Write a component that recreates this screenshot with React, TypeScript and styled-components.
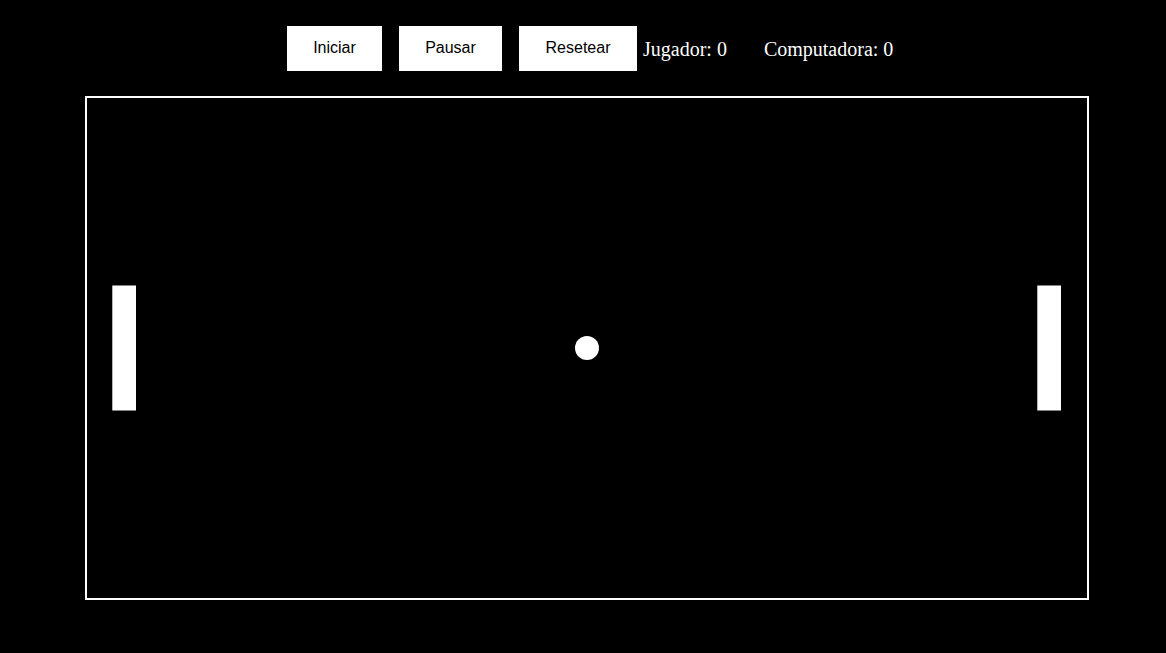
import React from "react";
import styled, { createGlobalStyle } from "styled-components";

const Global = createGlobalStyle`
  html, body { margin: 0; padding: 0; background: #000; }
  body { font-family: "Liberation Serif", "Times New Roman", serif; }
`;

const Page = styled.div`
  display: flex;
  flex-direction: column;
  width: 1166px;
  height: 653px;
  background: #000;
`;

const Toolbar = styled.div`
  display: flex;
  align-items: center;
  padding: 26px 0 0 287px;
  height: 45px;
`;

const Button = styled.button<{ $w: number; $mr: number }>`
  width: ${(p) => p.$w}px;
  height: 45px;
  margin-right: ${(p) => p.$mr}px;
  padding: 0;
  border: none;
  background: #fff;
  color: #000;
  font-family: "Liberation Sans", Arial, sans-serif;
  font-size: 16px;
  cursor: pointer;
  padding-bottom: 2px;
`;

const Score = styled.span<{ $mr: number }>`
  color: #fff;
  font-family: "Liberation Serif", "Times New Roman", serif;
  font-size: 20px;
  margin-right: ${(p) => p.$mr}px;
  padding-top: 2px;
`;

const Board = styled.div`
  margin: 25px 0 0 85px;
  width: 1000px;
  height: 500px;
  border: 2px solid #fff;
  background: #000;
`;

const Field = styled.svg`
  display: block;
  width: 1000px;
  height: 500px;
`;

export default function App() {
  return (
    <>
      <Global />
      <Page>
        <Toolbar>
          <Button $w={95} $mr={17}>Iniciar</Button>
          <Button $w={103} $mr={17}>Pausar</Button>
          <Button $w={118} $mr={6}>Resetear</Button>
          <Score $mr={37}>Jugador: 0</Score>
          <Score $mr={0}>Computadora: 0</Score>
        </Toolbar>
        <Board>
          <Field viewBox="0 0 1000 500">
            <rect x={25.3} y={187.5} width={23.7} height={125} fill="#fff" />
            <rect x={950.3} y={187.5} width={23.7} height={125} fill="#fff" />
            <circle cx={500} cy={250} r={12} fill="#fff" />
          </Field>
        </Board>
      </Page>
    </>
  );
}
